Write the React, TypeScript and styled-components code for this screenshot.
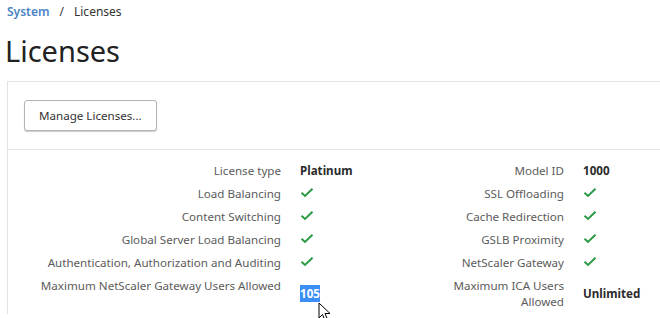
import * as React from 'react';
import styled, { createGlobalStyle } from 'styled-components';

const GlobalStyle = createGlobalStyle`
  html, body {
    margin: 0;
    padding: 0;
    background: #ffffff;
  }
  body {
    font-family: 'Noto Sans', 'Open Sans', sans-serif;
    color: #333333;
    overflow: hidden;
  }
`;

const Page = styled.div`
  width: 660px;
  height: 318px;
  overflow: hidden;
`;

const Breadcrumb = styled.div`
  display: flex;
  align-items: center;
  gap: 10px;
  padding: 2px 0 0 7px;
  height: 18px;
  font-size: 12px;
`;

const CrumbLink = styled.a`
  color: #4a84c4;
  font-weight: 600;
  text-decoration: none;
`;

const CrumbSep = styled.span`
  color: #333333;
`;

const Title = styled.h1`
  margin: 11px 0 0 5px;
  font-size: 29px;
  font-weight: 400;
  line-height: 40px;
  color: #222222;
`;

const Panel = styled.div`
  margin: 10px 0 0 7px;
  border-top: 1px solid #e3e3e3;
  border-left: 1px solid #e3e3e3;
`;

const Toolbar = styled.div`
  padding: 18px 0 18px 16px;
  border-bottom: 1px solid #e3e3e3;
`;

const ActionButton = styled.button`
  height: 31px;
  padding: 0 14px 1px;
  font-family: inherit;
  font-size: 11.6px;
  color: #333333;
  background: #ffffff;
  border: 1px solid #b4b4b4;
  border-radius: 3px;
  box-shadow: 0 1px 1px rgba(0, 0, 0, 0.2);
`;

const Details = styled.div`
  display: grid;
  grid-template-columns: 273px 130px 115px auto;
  column-gap: 19px;
  padding-top: 10px;
  font-size: 11.6px;
  line-height: 16px;
`;

const Label = styled.div`
  text-align: right;
  color: #5b5b5b;
  padding: 3px 0 4px;
  align-self: start;
`;

const Value = styled.div`
  color: #2b2b2b;
  font-weight: 700;
  padding: 3px 0 4px;
  align-self: center;
  position: relative;
`;

const Selected = styled.span`
  background: #3a8ef6;
  color: #ffffff;
  padding: 1px 0;
`;

const Cursor = styled.svg`
  position: absolute;
  left: 18px;
  top: 19px;
`;

function Check() {
  return (
    <svg width="14" height="11" viewBox="0 0 14 11">
      <path d="M1.5 5.8 L5 9 L12.5 1.8" fill="none" stroke="#2c9a45" strokeWidth="2" />
    </svg>
  );
}

type Row = { label: string; value: React.ReactNode; label2: string; value2: React.ReactNode };

const rows: Row[] = [
  { label: 'License type', value: 'Platinum', label2: 'Model ID', value2: '1000' },
  { label: 'Load Balancing', value: <Check />, label2: 'SSL Offloading', value2: <Check /> },
  { label: 'Content Switching', value: <Check />, label2: 'Cache Redirection', value2: <Check /> },
  { label: 'Global Server Load Balancing', value: <Check />, label2: 'GSLB Proximity', value2: <Check /> },
  { label: 'Authentication, Authorization and Auditing', value: <Check />, label2: 'NetScaler Gateway', value2: <Check /> },
];

export default function App() {
  return (
    <Page>
      <GlobalStyle />
      <Breadcrumb>
        <CrumbLink>System</CrumbLink>
        <CrumbSep>/</CrumbSep>
        <span>Licenses</span>
      </Breadcrumb>
      <Title>Licenses</Title>
      <Panel>
        <Toolbar>
          <ActionButton>Manage Licenses...</ActionButton>
        </Toolbar>
        <Details>
          {rows.map((r) => (
            <React.Fragment key={r.label}>
              <Label>{r.label}</Label>
              <Value>{r.value}</Value>
              <Label>{r.label2}</Label>
              <Value>{r.value2}</Value>
            </React.Fragment>
          ))}
          <Label>Maximum NetScaler Gateway Users Allowed</Label>
          <Value>
            <Selected>105</Selected>
            <Cursor width="14" height="20" viewBox="0 0 14 20">
              <path d="M1 1 L1 16 L4.5 12.5 L7 18.5 L9.5 17.5 L7 11.5 L12 11.5 Z" fill="#ffffff" stroke="#000000" strokeWidth="1" />
            </Cursor>
          </Value>
          <Label>Maximum ICA Users Allowed</Label>
          <Value>Unlimited</Value>
        </Details>
      </Panel>
    </Page>
  );
}
